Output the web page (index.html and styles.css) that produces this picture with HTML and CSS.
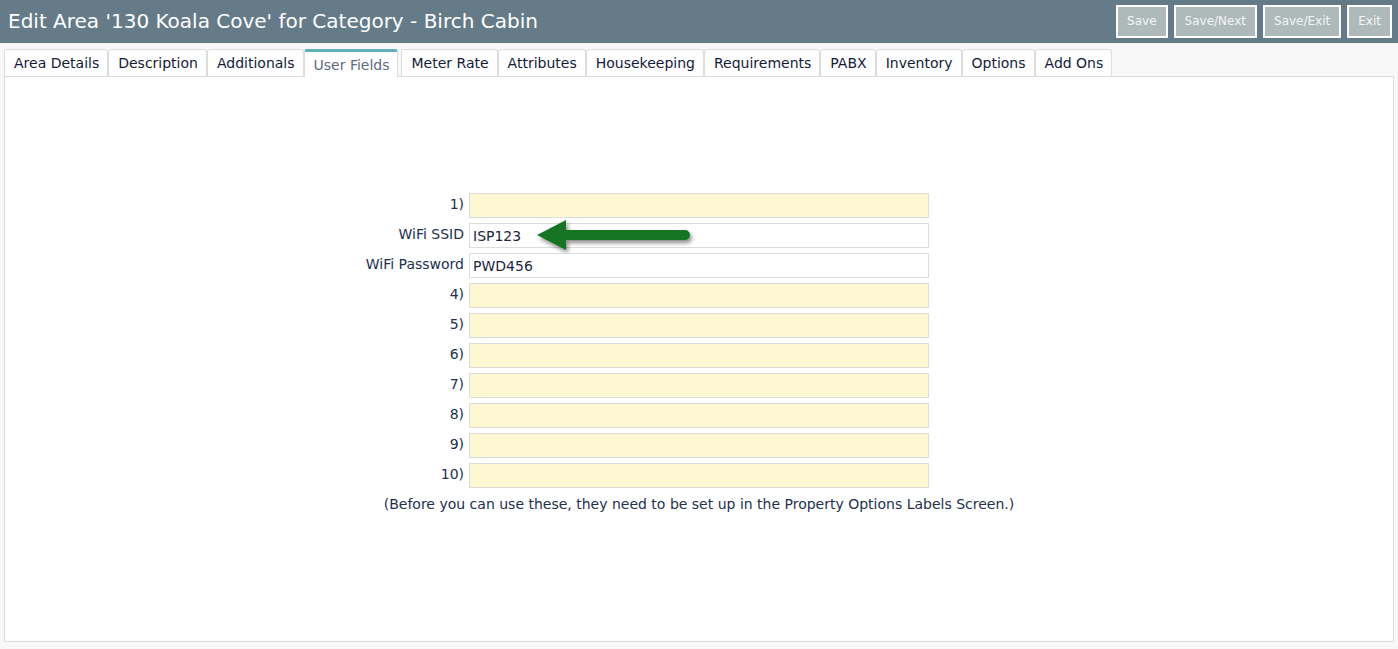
FILE: index.html
```html
<!DOCTYPE html>
<html lang="en">
<head>
    <meta charset="UTF-8">
    <title>Edit Area</title>
    <link rel="stylesheet" href="styles.css">
</head>
<body>

    <div class="topbar">
        <h1>Edit Area '130 Koala Cove' for Category - Birch Cabin</h1>
        <div class="actions">
            <button>Save</button>
            <button>Save/Next</button>
            <button>Save/Exit</button>
            <button>Exit</button>
        </div>
    </div>

    <ul class="tabs">
        <li>Area Details</li>
        <li>Description</li>
        <li>Additionals</li>
        <li class="active">User Fields</li>
        <li>Meter Rate</li>
        <li>Attributes</li>
        <li>Housekeeping</li>
        <li>Requirements</li>
        <li>PABX</li>
        <li>Inventory</li>
        <li>Options</li>
        <li>Add Ons</li>
    </ul>

    <div class="panel">
        <div class="fields">
            <label>1)</label><div class="field"><input type="text" class="empty"></div><span></span>
            <label>WiFi SSID</label>
            <div class="field">
                <input type="text" value="ISP123">
                <!-- callout arrow over the field -->
                <svg class="arrow" width="164" height="38" viewBox="0 0 164 38">
                    <path d="M0 16 L29 1 L29 11 L148 11 A5 5 0 0 1 148 21 L29 21 L29 31 Z" fill="#167522"/>
                </svg>
            </div><span></span>
            <label>WiFi Password</label><div class="field"><input type="text" value="PWD456"></div><span></span>
            <label>4)</label><div class="field"><input type="text" class="empty"></div><span></span>
            <label>5)</label><div class="field"><input type="text" class="empty"></div><span></span>
            <label>6)</label><div class="field"><input type="text" class="empty"></div><span></span>
            <label>7)</label><div class="field"><input type="text" class="empty"></div><span></span>
            <label>8)</label><div class="field"><input type="text" class="empty"></div><span></span>
            <label>9)</label><div class="field"><input type="text" class="empty"></div><span></span>
            <label>10)</label><div class="field"><input type="text" class="empty"></div><span></span>
        </div>
        <p class="note">(Before you can use these, they need to be set up in the Property Options Labels Screen.)</p>
    </div>

</body>
</html>
```

FILE: styles.css
```css
* {
    margin: 0;
    padding: 0;
    box-sizing: border-box;
    font-family: "DejaVu Sans", Verdana, sans-serif;
}
body {
    background: #f8f8f8;
    color: #1c2640;
}
.topbar {
    height: 43px;
    background: #657b88;
    display: flex;
    align-items: center;
    justify-content: space-between;
    padding: 0 6px 0 8px;
}
.topbar h1 {
    color: #fff;
    font-size: 20px;
    font-weight: normal;
    margin-top: -2px;
}
.actions {
    display: flex;
    gap: 6px;
    margin-top: -1px;
}
.actions button {
    height: 33px;
    padding: 0 9px;
    background: #adbab9;
    color: #f4f6f6;
    border: 2px solid #fff;
    font-size: 12px;
}
.tabs {
    list-style: none;
    display: flex;
    margin: 6px 4px 0;
    height: 27px;
}
.tabs li {
    height: 27px;
    padding: 0 8px 0 9px;
    line-height: 26px;
    font-size: 14px;
    color: #141a38;
    background: #fff;
    border: 1px solid #dcdcdc;
    border-bottom: none;
    border-radius: 3px 3px 0 0;
}
.tabs li.active {
    margin-right: 3px;
    border-top: 3px solid #5fb0bb;
    line-height: 25px;
    padding-top: 1px;
    color: #5d6b7c;
    height: 28px;
}
.panel {
    margin: 0 4px;
    height: 566px;
    background: #fff;
    border: 1px solid #dcdcdc;
    padding-top: 116px;
}
.fields {
    display: grid;
    grid-template-columns: 1fr 460px 1fr;
    column-gap: 5px;
    row-gap: 5px;
}
.fields label {
    text-align: right;
    font-size: 14px;
    line-height: 25px;
    margin-top: -1px;
    color: #22304e;
}
.field {
    position: relative;
}
.field input {
    display: block;
    width: 460px;
    height: 25px;
    border: 1px solid #dcdcdc;
    background: #fff;
    padding: 0 3px;
    font-size: 14px;
    color: #1c2640;
    outline: none;
}
.field input.empty {
    background: #fdf8d1;
}
.arrow {
    position: absolute;
    left: 68px;
    top: -4px;
    filter: drop-shadow(2px 3px 2px rgba(0, 0, 0, 0.45));
}
.note {
    text-align: center;
    font-size: 14px;
    margin-top: 8px;
    color: #22304e;
}
```
